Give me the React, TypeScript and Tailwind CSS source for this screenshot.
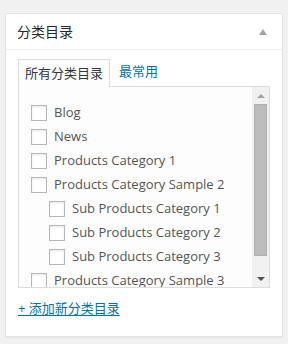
const font = "font-['Open_Sans','Noto_Sans_CJK_SC',sans-serif]";

const items = [
  { name: "Blog", depth: 0 },
  { name: "News", depth: 0 },
  { name: "Products Category 1", depth: 0 },
  { name: "Products Category Sample 2", depth: 0 },
  { name: "Sub Products Category 1", depth: 1 },
  { name: "Sub Products Category 2", depth: 1 },
  { name: "Sub Products Category 3", depth: 1 },
  { name: "Products Category Sample 3", depth: 0 },
];

function Checkbox() {
  return (
    <span className="w-[16px] h-[16px] shrink-0 border border-[#b4b9be] bg-white shadow-[inset_0_1px_2px_rgba(0,0,0,0.1)]" />
  );
}

function ScrollBar() {
  return (
    <div className="w-[17px] shrink-0 bg-[#f1f1f1] flex flex-col">
      <div className="h-[17px] flex items-center justify-center">
        <span className="w-0 h-0 border-l-[4px] border-r-[4px] border-b-[4px] border-l-transparent border-r-transparent border-b-[#a3a3a3]" />
      </div>
      <div className="h-[152px] mx-[2px] bg-[#bdbdbd] border border-[#b0b0b0]" />
      <div className="flex-1 flex items-end">
        <div className="h-[17px] w-full flex items-center justify-center">
          <span className="w-0 h-0 border-l-[4px] border-r-[4px] border-t-[4px] border-l-transparent border-r-transparent border-t-[#505050]" />
        </div>
      </div>
    </div>
  );
}

export default function App() {
  return (
    <div className={`min-h-screen bg-[#f1f1f1] pt-[13px] px-[5px] ${font}`}>
      <div className="h-[324px] border border-[#e5e5e5] bg-white shadow-[0_1px_1px_rgba(0,0,0,0.04)]">
        <div className="h-[36px] border-b border-[#eeeeee] flex items-center justify-between pl-[11px] pr-[15px]">
          <h2 className="text-[14px] text-[#23282d]">分类目录</h2>
          <span className="w-0 h-0 border-l-[4px] border-r-[4px] border-b-[6px] border-l-transparent border-r-transparent border-b-[#a0a5aa]" />
        </div>

        <div className="px-[12px] pt-[8px]">
          <div className="flex items-end text-[13px]">
            <div className="relative z-10 -mb-px h-[28px] px-[6px] flex items-center border border-b-0 border-[#dddddd] bg-[#fdfdfd] text-[#32373c]">
              所有分类目录
            </div>
            <div className="h-[28px] px-[9px] flex items-center text-[#0073aa]">最常用</div>
          </div>

          <div className="h-[202px] border border-[#dddddd] bg-[#fdfdfd] flex">
            <ul className="flex-1 overflow-hidden pl-[12px] pt-[14px] text-[13px] text-[#555555]">
              {items.map((it) => (
                <li
                  key={it.name}
                  className={`h-[24px] flex items-center gap-[7px] whitespace-nowrap ${it.depth ? "pl-[18px]" : ""}`}
                >
                  <Checkbox />
                  <span>{it.name}</span>
                </li>
              ))}
            </ul>
            <ScrollBar />
          </div>

          <div className="mt-[10px] leading-[20px] text-[13px]">
            <a href="#" className="text-[#0073aa] underline underline-offset-2">
              + 添加新分类目录
            </a>
          </div>
        </div>
      </div>
    </div>
  );
}
